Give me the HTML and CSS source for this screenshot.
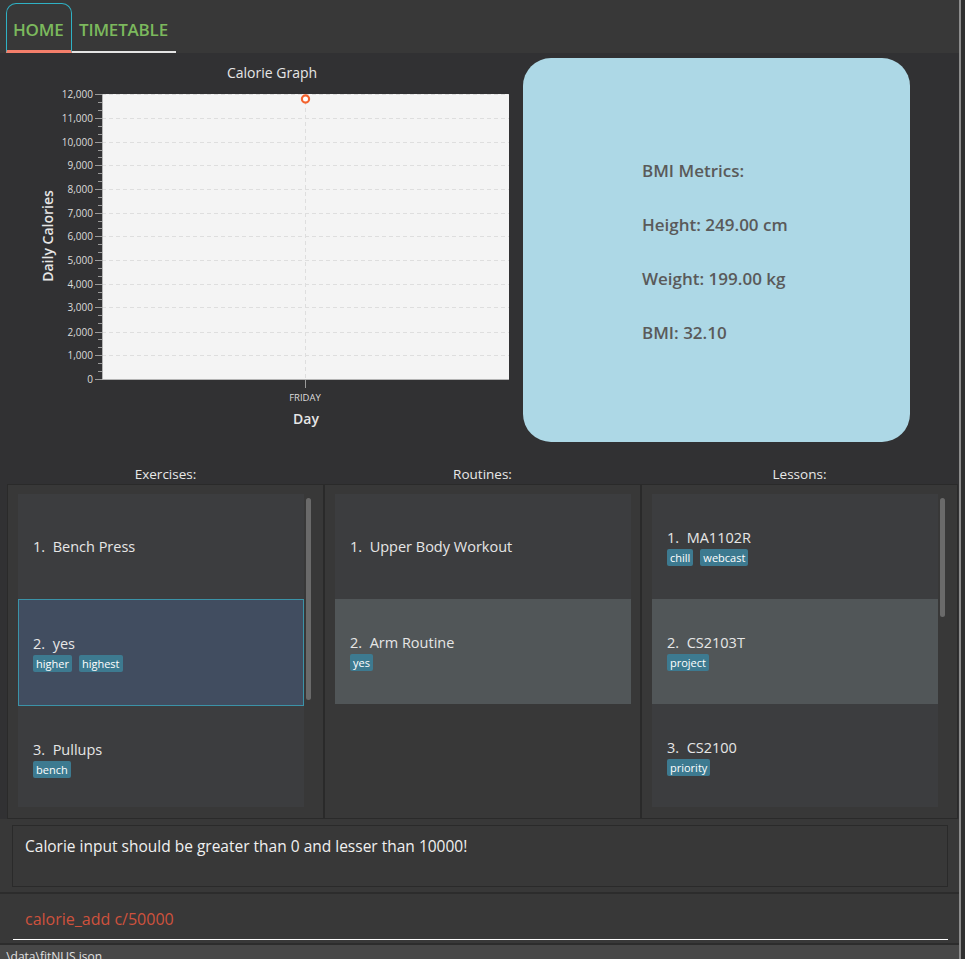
FILE: index.html
```html
<!DOCTYPE html>
<html lang="en">
<head>
<meta charset="utf-8">
<title>fitNUS</title>
<link rel="stylesheet" href="styles.css">
</head>
<body>
<div class="app">
  <div class="window">
    <header class="tabbar">
      <div class="tab tab-active">HOME</div>
      <div class="tab tab-plain">TIMETABLE</div>
    </header>
    <main class="home">
      <section class="top">
        <div class="chart">
          <svg class="chart-svg" width="515" height="401" viewBox="0 54 515 401" xmlns="http://www.w3.org/2000/svg">
            <text class="chart-title" x="272" y="79" text-anchor="middle">Calorie Graph</text>
            <rect x="102" y="95" width="407" height="285" fill="#f4f4f4"/>
            <path d="M102 95.5H509M102 119.5H509M102 143.5H509M102 166.5H509M102 190.5H509M102 214.5H509M102 237.5H509M102 261.5H509M102 285.5H509M102 308.5H509M102 333.5H509M102 356.5H509" stroke="#dedede" stroke-width="1" stroke-dasharray="4 3" fill="none"/>
            <path d="M305.5 95V380" stroke="#dedede" stroke-width="1" stroke-dasharray="4 3" fill="none"/>
            <path d="M102.5 95V381M102 380.5H509" stroke="#b4b4b4" stroke-width="1" fill="none"/>
            <path d="M95 95.5H102M95 119.5H102M95 143.5H102M95 166.5H102M95 190.5H102M95 214.5H102M95 237.5H102M95 261.5H102M95 285.5H102M95 308.5H102M95 333.5H102M95 356.5H102M95 380.5H102" stroke="#9a9a9a" stroke-width="1" fill="none"/>
            <path d="M98 103.5H102M98 111.5H102M98 127.5H102M98 135.5H102M98 151.5H102M98 158.5H102M98 174.5H102M98 182.5H102M98 198.5H102M98 206.5H102M98 222.5H102M98 229.5H102M98 245.5H102M98 253.5H102M98 269.5H102M98 277.5H102M98 293.5H102M98 300.5H102M98 316.5H102M98 324.5H102M98 340.5H102M98 348.5H102M98 364.5H102M98 372.5H102" stroke="#9a9a9a" stroke-width="1" fill="none"/>
            <path d="M305.5 381V389" stroke="#9a9a9a" stroke-width="1" fill="none"/>
            <g class="ylabels" text-anchor="end">
              <text x="93" y="98.5">12,000</text>
              <text x="93" y="122.5">11,000</text>
              <text x="93" y="146.5">10,000</text>
              <text x="93" y="169.5">9,000</text>
              <text x="93" y="193.5">8,000</text>
              <text x="93" y="217.5">7,000</text>
              <text x="93" y="240.5">6,000</text>
              <text x="93" y="264.5">5,000</text>
              <text x="93" y="288.5">4,000</text>
              <text x="93" y="311.5">3,000</text>
              <text x="93" y="336.5">2,000</text>
              <text x="93" y="359.5">1,000</text>
              <text x="93" y="383.5">0</text>
            </g>
            <text class="xlabel" x="305" y="401.5" text-anchor="middle">FRIDAY</text>
            <text class="axis-title" x="306" y="425" text-anchor="middle">Day</text>
            <text class="axis-title" transform="translate(53 237) rotate(-90)" text-anchor="middle">Daily Calories</text>
            <circle cx="305.5" cy="100" r="3.6" fill="#ffffff" stroke="#f3622d" stroke-width="2.2"/>
          </svg>
        </div>
        <div class="bmi">
          <div class="bmi-line">BMI Metrics:</div>
          <div class="bmi-line">Height: 249.00 cm</div>
          <div class="bmi-line">Weight: 199.00 kg</div>
          <div class="bmi-line">BMI: 32.10</div>
        </div>
      </section>

      <section class="lists">
        <div class="col-title">Exercises:</div>
        <div class="col-title">Routines:</div>
        <div class="col-title">Lessons:</div>

        <div class="panel">
          <div class="list">
            <div class="cell">
              <div class="cell-title">1.&nbsp;&nbsp;Bench Press</div>
            </div>
            <div class="cell cell-selected">
              <div class="cell-title">2.&nbsp;&nbsp;yes</div>
              <div class="tags"><span class="tag">higher</span><span class="tag">highest</span></div>
            </div>
            <div class="cell">
              <div class="cell-title">3.&nbsp;&nbsp;Pullups</div>
              <div class="tags"><span class="tag">bench</span></div>
            </div>
          </div>
          <div class="scrollbar"><div class="thumb thumb-long"></div></div>
        </div>

        <div class="panel">
          <div class="list">
            <div class="cell">
              <div class="cell-title">1.&nbsp;&nbsp;Upper Body Workout</div>
            </div>
            <div class="cell cell-focused">
              <div class="cell-title">2.&nbsp;&nbsp;Arm Routine</div>
              <div class="tags"><span class="tag">yes</span></div>
            </div>
          </div>
        </div>

        <div class="panel">
          <div class="list">
            <div class="cell">
              <div class="cell-title">1.&nbsp;&nbsp;MA1102R</div>
              <div class="tags"><span class="tag">chill</span><span class="tag">webcast</span></div>
            </div>
            <div class="cell cell-focused">
              <div class="cell-title">2.&nbsp;&nbsp;CS2103T</div>
              <div class="tags"><span class="tag">project</span></div>
            </div>
            <div class="cell">
              <div class="cell-title">3.&nbsp;&nbsp;CS2100</div>
              <div class="tags"><span class="tag">priority</span></div>
            </div>
          </div>
          <div class="scrollbar"><div class="thumb thumb-short"></div></div>
        </div>
      </section>

      <section class="result">
        <div class="result-box">Calorie input should be greater than 0 and lesser than 10000!</div>
      </section>

      <section class="command">
        <div class="command-input">calorie_add c/50000</div>
      </section>
    </main>
    <footer class="status">.\data\fitNUS.json</footer>
  </div>
  <div class="edge"></div>
</div>
</body>
</html>
```

FILE: styles.css
```css
html, body {
  margin: 0;
  padding: 0;
}

body {
  background: #2b2b2b;
  font-family: "Open Sans", "Noto Sans", "DejaVu Sans", sans-serif;
}

.app {
  display: flex;
  width: 965px;
  height: 959px;
  overflow: hidden;
}

.window {
  width: 959px;
  height: 959px;
  display: flex;
  flex-direction: column;
  background: #383838;
}

.edge {
  width: 4px;
  border-left: 2px solid #8c8c8c;
  background: #2f2f2f;
}

/* tabs */
.tabbar {
  height: 53px;
  flex: none;
  display: flex;
  align-items: flex-end;
  padding-left: 6px;
  background: #383838;
}

.tab {
  box-sizing: border-box;
  height: 50px;
  display: flex;
  align-items: center;
  font-size: 17px;
  font-weight: 600;
  color: #7cb95d;
  letter-spacing: -0.2px;
}

.tab-active {
  width: 66px;
  border: 1px solid #2fb1c4;
  border-bottom: 3px solid #f47f6b;
  border-radius: 10px 10px 0 0;
  padding: 5px 0 0 6px;
}

.tab-plain {
  width: 104px;
  border-bottom: 2px solid #e4e4e4;
  padding: 4px 0 0 7px;
}

/* home */
.home {
  flex: 1;
  display: flex;
  flex-direction: column;
  background: #313133;
}

.top {
  height: 401px;
  flex: none;
  display: flex;
  align-items: flex-start;
}

.chart-svg {
  display: block;
}

.chart-title {
  font-size: 14px;
  fill: #e6e6e6;
}

.ylabels text {
  font-size: 10px;
  fill: #dcdcdc;
}

.xlabel {
  font-size: 9.5px;
  fill: #dcdcdc;
}

.axis-title {
  font-size: 14px;
  font-weight: 600;
  fill: #e6e6e6;
}

.bmi {
  box-sizing: border-box;
  width: 387px;
  height: 384px;
  margin: 5px 0 0 8px;
  padding: 4px 0 0 119px;
  border-radius: 28px;
  background: #add8e6;
  display: flex;
  flex-direction: column;
  justify-content: center;
  color: #5a5a5a;
  font-size: 17px;
  font-weight: 600;
}

.bmi-line {
  line-height: 54px;
}

/* lists */
.lists {
  flex: none;
  display: grid;
  grid-template-columns: 317px 317px 317px;
  grid-template-rows: 30px 335px;
  padding-left: 7px;
}

.col-title {
  display: flex;
  align-items: flex-end;
  justify-content: center;
  padding-bottom: 1px;
  font-size: 13.5px;
  color: #e8e8e8;
}

.panel {
  box-sizing: border-box;
  height: 335px;
  display: flex;
  padding: 9px 9px 9px 10px;
  background: #383838;
  border: 1px solid #2a2a2a;
}

.list {
  flex: 1;
  height: 313px;
  overflow: hidden;
}

.cell {
  box-sizing: border-box;
  height: 105px;
  display: flex;
  flex-direction: column;
  justify-content: center;
  padding-left: 15px;
  background: #3c3d3f;
}

.cell-selected {
  height: 107px;
  background: #414d60;
  border: 1px solid #3b93a8;
  padding-left: 14px;
}

.cell-focused {
  background: #515658;
}

.cell-title {
  font-size: 14.5px;
  line-height: 20px;
  color: #e6e6e6;
}

.tags {
  display: flex;
  gap: 7px;
  margin-top: 1px;
}

.tag {
  font-size: 11px;
  line-height: 17px;
  padding: 0 3px;
  border-radius: 2px;
  background: #3d7a90;
  color: #ffffff;
}

.scrollbar {
  width: 10px;
  flex: none;
  padding: 4px 0 0 2px;
  box-sizing: border-box;
}

.thumb {
  width: 5px;
  border-radius: 3px;
  background: #6a6a6a;
}

.thumb-long {
  height: 202px;
}

.thumb-short {
  height: 119px;
}

/* result */
.result {
  box-sizing: border-box;
  height: 75px;
  flex: none;
  padding: 6px 11px 0 12px;
  background: #383838;
  border-bottom: 2px solid #2c2c2c;
}

.result-box {
  box-sizing: border-box;
  height: 62px;
  border: 1px solid #2a2a2a;
  padding: 9px 12px;
  font-size: 15.5px;
  color: #f0f0f0;
}

/* command */
.command {
  box-sizing: border-box;
  height: 51px;
  flex: none;
  padding: 0 11px 0 13px;
  background: #383838;
  border-bottom: 2px solid #2c2c2c;
}

.command-input {
  box-sizing: border-box;
  height: 46px;
  display: flex;
  align-items: center;
  padding: 4px 0 0 12px;
  border-bottom: 1px solid #ffffff;
  font-size: 16px;
  color: #cf523d;
}

/* status */
.status {
  height: 14px;
  flex: none;
  box-sizing: border-box;
  padding: 5px 0 0 3px;
  background: #474747;
  font-size: 12px;
  line-height: 14px;
  color: #e0e0e0;
  overflow: hidden;
  white-space: nowrap;
}
```
